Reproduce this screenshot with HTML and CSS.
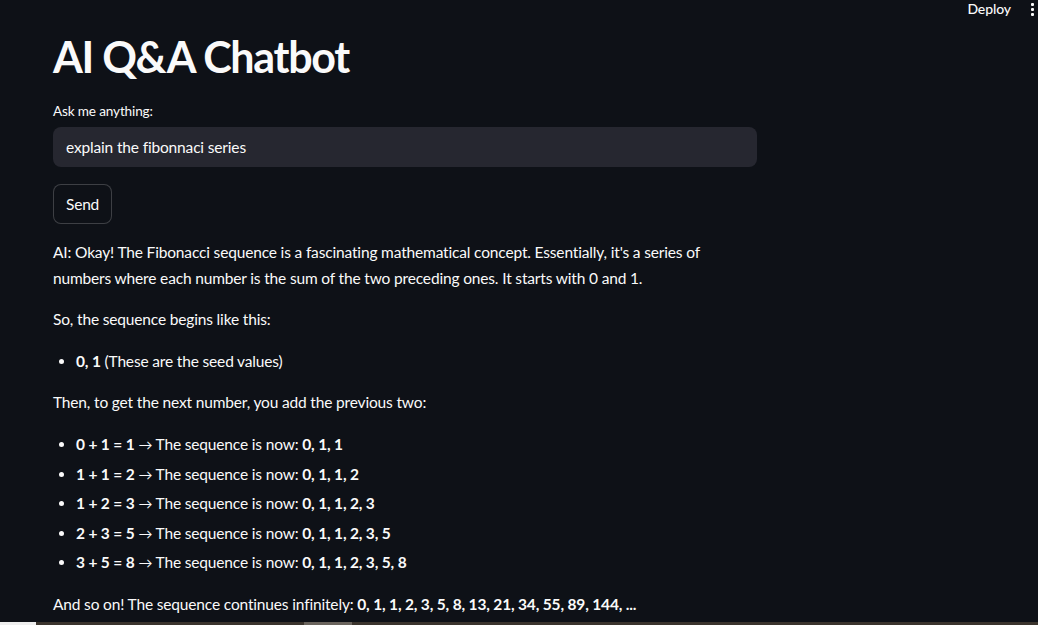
FILE: index.html
```html
<!DOCTYPE html>
<html lang="en">
<head>
<meta charset="utf-8">
<title>AI Q&amp;A Chatbot</title>
<link rel="stylesheet" href="styles.css">
</head>
<body>
<header class="toolbar">
  <span class="deploy">Deploy</span>
  <span class="kebab"><i></i><i></i><i></i></span>
</header>
<main class="main">
  <h1 class="title">AI Q&amp;A Chatbot</h1>
  <label class="label">Ask me anything:</label>
  <div class="input">explain the fibonnaci series</div>
  <button class="btn">Send</button>
  <div class="answer">
    <p>AI: Okay! The Fibonacci sequence is a fascinating mathematical concept. Essentially, it's a series of numbers where each number is the sum of the two preceding ones. It starts with 0 and 1.</p>
    <p>So, the sequence begins like this:</p>
    <ul>
      <li><b>0, 1</b> (These are the seed values)</li>
    </ul>
    <p>Then, to get the next number, you add the previous two:</p>
    <ul>
      <li><b>0 + 1 = 1</b> <span class="arrow">→</span> The sequence is now: <b>0, 1, 1</b></li>
      <li><b>1 + 1 = 2</b> <span class="arrow">→</span> The sequence is now: <b>0, 1, 1, 2</b></li>
      <li><b>1 + 2 = 3</b> <span class="arrow">→</span> The sequence is now: <b>0, 1, 1, 2, 3</b></li>
      <li><b>2 + 3 = 5</b> <span class="arrow">→</span> The sequence is now: <b>0, 1, 1, 2, 3, 5</b></li>
      <li><b>3 + 5 = 8</b> <span class="arrow">→</span> The sequence is now: <b>0, 1, 1, 2, 3, 5, 8</b></li>
    </ul>
    <p>And so on! The sequence continues infinitely: <b>0, 1, 1, 2, 3, 5, 8, 13, 21, 34, 55, 89, 144, ...</b></p>
  </div>
</main>
<div class="strip"><span class="s-white"></span><span class="s-dark"></span><span class="s-light"></span><span class="s-rest"></span></div>
</body>
</html>
```
FILE: styles.css
```css
html, body {
  margin: 0;
  padding: 0;
  overflow: hidden;
  background: #0e1117;
}
body {
  color: #fafafa;
  font-family: "Source Sans Pro", Lato, "Noto Sans", sans-serif;
  font-size: 15.5px;
  letter-spacing: -0.16px;
  line-height: 25.6px;
  height: 625px;
}
.toolbar {
  display: flex;
  justify-content: flex-end;
  align-items: center;
  height: 18px;
  gap: 20px;
  padding-right: 4px;
}
.deploy {
  font-size: 14px;
  line-height: 18px;
  font-weight: 500;
  letter-spacing: -0.1px;
}
.kebab {
  display: flex;
  flex-direction: column;
  gap: 2px;
  padding-top: 1px;
}
.kebab i {
  display: block;
  width: 3px;
  height: 3px;
  background: #fafafa;
  border-radius: 1px;
}
.main {
  width: 704px;
  padding-left: 53px;
  display: flex;
  flex-direction: column;
  align-items: flex-start;
}
.title {
  margin: 13px 0 16px;
  font-size: 43px;
  line-height: 52px;
  font-weight: 700;
  letter-spacing: -1.3px;
}
.label {
  font-size: 13.6px;
  line-height: 24px;
  margin-bottom: 4px;
}
.input {
  box-sizing: border-box;
  width: 704px;
  height: 40px;
  background: #262730;
  border-radius: 8px;
  padding: 0 13px;
  line-height: 40px;
}
.btn {
  margin-top: 17px;
  height: 40px;
  padding: 0 12px;
  background: #0e1117;
  color: #fafafa;
  border: 1px solid rgba(250, 250, 250, 0.2);
  border-radius: 8px;
  font-family: inherit;
  font-size: 15.5px;
  letter-spacing: -0.2px;
}
.answer {
  margin-top: 16px;
  width: 704px;
}
.answer p {
  margin: 0 0 16px;
}
.answer ul {
  margin: 0 0 16px;
  padding-left: 23px;
}
.answer li {
  margin: 0 0 4px;
}
.answer b {
  font-weight: 700;
}
.arrow {
  font-size: 14px;
  line-height: 1;
}
.strip {
  position: fixed;
  left: 0;
  right: 0;
  bottom: 0;
  height: 3px;
  display: flex;
}
.s-white { width: 36px; background: #eeeeee; }
.s-dark { width: 268px; background: #3b342d; }
.s-light { width: 48px; background: #6a645d; }
.s-rest { flex: 1; background: #3b342d; }
```
